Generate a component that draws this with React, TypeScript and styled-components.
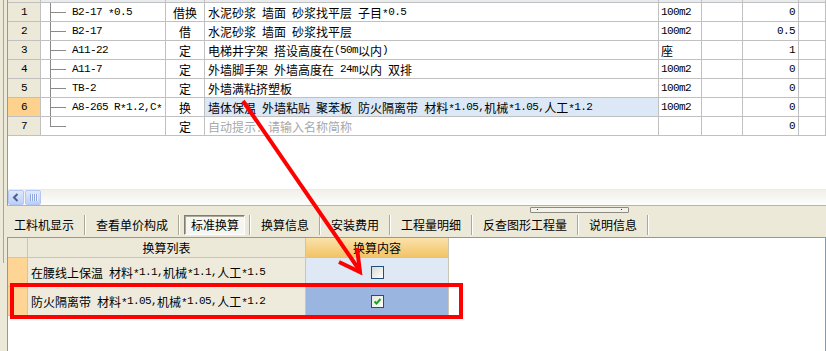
import React from "react";
import styled, { createGlobalStyle } from "styled-components";

const GlobalStyle = createGlobalStyle`
  html, body {
    margin: 0;
    padding: 0;
    width: 826px;
    height: 351px;
    overflow: hidden;
    background: #ece9d8;
  }
  body {
    font-family: "Noto Sans CJK SC", "Liberation Sans", sans-serif;
    font-size: 12px;
    color: #000;
  }
  * { box-sizing: border-box; }
`;

type Row = {
  n: number;
  code: string;
  type: string;
  name: string;
  unit: string;
  qty: string;
  active?: boolean;
  hint?: boolean;
};

const rows: Row[] = [
  { n: 1, code: "B2-17 *0.5", type: "借换", name: "水泥砂浆 墙面 砂浆找平层 子目*0.5", unit: "100m2", qty: "0" },
  { n: 2, code: "B2-17", type: "借", name: "水泥砂浆 墙面 砂浆找平层", unit: "100m2", qty: "0.5" },
  { n: 3, code: "A11-22", type: "定", name: "电梯井字架 搭设高度在(50m以内)", unit: "座", qty: "1" },
  { n: 4, code: "A11-7", type: "定", name: "外墙脚手架 外墙高度在 24m以内 双排", unit: "100m2", qty: "0" },
  { n: 5, code: "TB-2", type: "定", name: "外墙满粘挤塑板", unit: "100m2", qty: "0" },
  {
    n: 6,
    code: "A8-265 R*1.2,C*",
    type: "换",
    name: "墙体保温 外墙粘贴 聚苯板 防火隔离带 材料*1.05,机械*1.05,人工*1.2",
    unit: "100m2",
    qty: "0",
    active: true,
  },
  { n: 7, code: "", type: "定", name: "自动提示：请输入名称简称", unit: "", qty: "0", hint: true },
];

const tabs = ["工料机显示", "查看单价构成", "标准换算", "换算信息", "安装费用", "工程量明细", "反查图形工程量", "说明信息"];

const options = [
  { label: "在腰线上保温 材料*1.1,机械*1.1,人工*1.5", checked: false },
  { label: "防火隔离带 材料*1.05,机械*1.05,人工*1.2", checked: true },
];

// half-width runs get a narrow mono face so they take 6px a char, like SimSun
function Txt({ children }: { children: string }) {
  const parts = children.split(/([\x20-\x7e]+)/);
  return (
    <>
      {parts.map((p, i) => {
        if (p === "") return null;
        if (!/[\x20-\x7e]/.test(p)) return <span key={i}>{p}</span>;
        return (
          <Half key={i}>
            {p.split(/(\*)/).map((s, j) => (s === "*" ? <Star key={j}>*</Star> : s))}
          </Half>
        );
      })}
    </>
  );
}

export default function App() {
  return (
    <Window>
      <GlobalStyle />
      <Frame />
      <Main>
        <TopPanel>
          <TopGrid>
            <HeadStrip $beige />
            {Array.from({ length: 7 }).map((_, i) => (
              <HeadStrip key={i} />
            ))}
            {rows.map((r) => (
              <React.Fragment key={r.n}>
                <NumCell $active={r.active}>
                  <Txt>{String(r.n)}</Txt>
                </NumCell>
                <CodeCell>
                  <Branch $last={r.n === rows.length} />
                  <Txt>{r.code}</Txt>
                </CodeCell>
                <Cell $align="center">{r.type}</Cell>
                <Cell $active={r.active} $hint={r.hint}>
                  <Txt>{r.name}</Txt>
                </Cell>
                <Cell $pad={2}>
                  <Txt>{r.unit}</Txt>
                </Cell>
                <Cell />
                <Cell $align="right">
                  <Txt>{r.qty}</Txt>
                </Cell>
                <Cell />
              </React.Fragment>
            ))}
          </TopGrid>
          <Blank />
          <HScroll>
            <ScrollBtn>
              <svg width="8" height="9" viewBox="0 0 8 9">
                <path d="M5.5 1 L2 4.5 L5.5 8" fill="none" stroke="#4d6185" strokeWidth="2" />
              </svg>
            </ScrollBtn>
            <Thumb>
              <GripLine />
              <GripLine />
              <GripLine />
              <GripLine />
            </Thumb>
          </HScroll>
        </TopPanel>
        <Splitter>
          <Handle>
            <Dot />
            <Dot />
          </Handle>
        </Splitter>
        <TabBar>
          {tabs.map((t) => (
            <React.Fragment key={t}>
              <Tab $active={t === "标准换算"}>{t === "标准换算" ? <ActiveBox>{t}</ActiveBox> : t}</Tab>
              <Sep />
            </React.Fragment>
          ))}
        </TabBar>
        <BottomPanel>
          <SubGrid>
            <SubHead />
            <SubHead>换算列表</SubHead>
            <SubHead $orange>换算内容</SubHead>
            {options.map((o) => (
              <React.Fragment key={o.label}>
                <Marker />
                <OptionCell>
                  <Txt>{o.label}</Txt>
                </OptionCell>
                <ValueCell $selected={o.checked}>
                  <CheckBox $checked={o.checked}>
                    {o.checked && (
                      <svg width="9" height="9" viewBox="0 0 9 9">
                        <path d="M1.5 4.5 L3.5 6.5 L7.5 2" fill="none" stroke="#21a121" strokeWidth="2" />
                      </svg>
                    )}
                  </CheckBox>
                </ValueCell>
              </React.Fragment>
            ))}
          </SubGrid>
        </BottomPanel>
      </Main>
      <Callout />
      <Arrow width="826" height="351" viewBox="0 0 826 351">
        <line x1="243" y1="101" x2="360" y2="271" stroke="#ff0000" strokeWidth="4" />
        <polyline points="357,248 360,272 339,262" fill="none" stroke="#ff0000" strokeWidth="4" />
      </Arrow>
    </Window>
  );
}

const Window = styled.div`
  position: relative;
  display: flex;
  width: 826px;
  height: 351px;
  overflow: hidden;
`;

const Frame = styled.div`
  width: 7px;
  flex-shrink: 0;
  background: linear-gradient(#9aa7b8, #9aa7b8) 3px 0 / 1px 263px no-repeat, #ece9d8;
`;

const Main = styled.div`
  flex: 1;
  display: flex;
  flex-direction: column;
  min-width: 0;
`;

const TopPanel = styled.div`
  height: 206px;
  display: flex;
  flex-direction: column;
  background: #fff;
  border-left: 1px solid #7f9db9;
  border-bottom: 1px solid #a9b6c6;
`;

const TopGrid = styled.div`
  display: grid;
  grid-template-columns: 33px 125px 39px 454px 43px 41px 56px 1fr;
  grid-template-rows: 3px;
  grid-auto-rows: 19px;
`;

const HeadStrip = styled.div<{ $beige?: boolean }>`
  background: ${(p) => (p.$beige ? "#ece9d8" : "#e9ecef")};
  border-right: 1px solid #c0c0c0;
  border-bottom: 1px solid #c0c0c0;
`;

const Cell = styled.div<{
  $align?: "left" | "center" | "right";
  $active?: boolean;
  $hint?: boolean;
  $pad?: number;
}>`
  display: flex;
  align-items: center;
  justify-content: ${(p) =>
    p.$align === "center" ? "center" : p.$align === "right" ? "flex-end" : "flex-start"};
  padding: 0 3px 0 ${(p) => (p.$pad ?? 3)}px;
  border-right: 1px solid #c0c0c0;
  border-bottom: 1px solid #c0c0c0;
  background: ${(p) => (p.$active ? "#dde8f6" : "#fff")};
  color: ${(p) => (p.$hint ? "#a8a8a8" : "#000")};
  white-space: nowrap;
  overflow: hidden;
`;

const NumCell = styled(Cell)`
  justify-content: center;
  background: ${(p) => (p.$active ? "#fed28c" : "#ece9d8")};
`;

const CodeCell = styled(Cell)`
  padding-left: 9px;
  align-items: stretch;

  & > span:not(:first-child) {
    align-self: center;
  }
`;

const Branch = styled.span<{ $last?: boolean }>`
  width: 16px;
  margin-right: 6px;
  background:
    linear-gradient(#8a8a8a, #8a8a8a) left top / 1px ${(p) => (p.$last ? "50%" : "100%")} no-repeat,
    linear-gradient(#8a8a8a, #8a8a8a) left 50% / 100% 1px no-repeat;
`;

const Half = styled.span`
  font-family: "Liberation Mono", "DejaVu Sans Mono", monospace;
  font-size: 11px;
  letter-spacing: -0.6px;
  white-space: pre;
`;

const Star = styled.span`
  display: inline-block;
  transform: translateY(2px);
`;

const Blank = styled.div`
  flex: 1;
`;

const HScroll = styled.div`
  height: 16px;
  display: flex;
  gap: 1px;
  background: linear-gradient(#f1f0ea, #fdfdfb);
  border-top: 1px solid #eceae2;
`;

const ScrollBtn = styled.div`
  width: 16px;
  height: 15px;
  display: flex;
  align-items: center;
  justify-content: center;
  border: 1px solid #b3c7f3;
  border-radius: 2px;
  background: linear-gradient(#dfe8fe, #bccffb);
`;

const Thumb = styled(ScrollBtn)`
  gap: 1px;
`;

const GripLine = styled.span`
  width: 1px;
  height: 7px;
  background: #8ea6dc;
  box-shadow: 1px 0 0 #eef3ff;
`;

const Splitter = styled.div`
  height: 7px;
  display: flex;
  align-items: center;
  padding-left: 523px;
`;

const Handle = styled.div`
  width: 99px;
  height: 6px;
  display: flex;
  align-items: center;
  justify-content: space-between;
  padding: 0 6px;
  border: 1px solid #8d8b80;
  border-radius: 1px;
  background: #f3f2ea;
`;

const Dot = styled.span`
  width: 1px;
  height: 1px;
  background: #1b2f6e;
`;

const TabBar = styled.div`
  height: 24px;
  display: flex;
  align-items: center;
  background: #ece9d8;
`;

const Tab = styled.div<{ $active?: boolean }>`
  padding: 0 ${(p) => (p.$active ? "4px" : "10px")};
  white-space: nowrap;
  line-height: 20px;

  &:first-child {
    padding-left: 7px;
  }
`;

const ActiveBox = styled.div`
  height: 20px;
  padding: 0 5px 0 6px;
  border: 1px solid;
  border-color: #807d70 #fff #fff #807d70;
  box-shadow: inset 1px 1px 0 #aca899;
  background: #f6f5ef;
  line-height: 18px;
`;

const Sep = styled.span`
  width: 2px;
  height: 20px;
  border-left: 1px solid #aca899;
  border-right: 1px solid #fff;
`;

const BottomPanel = styled.div`
  flex: 1;
  background: #fff;
  border: 1px solid #7f9db9;
  border-bottom: none;
`;

const SubGrid = styled.div`
  display: grid;
  grid-template-columns: 20px 278px 143px;
  grid-template-rows: 20px 29px 29px;
`;

const SubHead = styled.div<{ $orange?: boolean }>`
  display: flex;
  align-items: center;
  justify-content: center;
  border-right: 1px solid #c9c6b6;
  border-bottom: 1px solid #c9c6b6;
  background: ${(p) => (p.$orange ? "linear-gradient(#fbe1ab, #f2c466)" : "#ece9d8")};
`;

const Marker = styled.div`
  background: #fed594;
  border-right: 1px solid #c9c6b6;
  border-bottom: 1px solid #c9c6b6;
`;

const OptionCell = styled.div`
  display: flex;
  align-items: center;
  padding-left: 3px;
  background: #eeebdd;
  border-right: 1px solid #c9c6b6;
  border-bottom: 1px solid #c9c6b6;
  white-space: nowrap;
`;

const ValueCell = styled.div<{ $selected?: boolean }>`
  display: flex;
  align-items: center;
  justify-content: center;
  background: ${(p) => (p.$selected ? "#99b5e0" : "#dfe8f5")};
  border-right: 1px solid #c9c6b6;
  border-bottom: 1px solid #c9c6b6;
`;

const CheckBox = styled.span<{ $checked?: boolean }>`
  width: 13px;
  height: 13px;
  display: flex;
  align-items: center;
  justify-content: center;
  border: 1px solid #1c5180;
  background: ${(p) =>
    p.$checked ? "linear-gradient(135deg, #e6e6e0, #fff)" : "linear-gradient(135deg, #d8d8d2, #fff)"};
`;

const Callout = styled.div`
  position: absolute;
  left: 10px;
  top: 283px;
  width: 453px;
  height: 36px;
  border: 4px solid #ff0000;
  pointer-events: none;
`;

const Arrow = styled.svg`
  position: absolute;
  left: 0;
  top: 0;
  pointer-events: none;
`;
